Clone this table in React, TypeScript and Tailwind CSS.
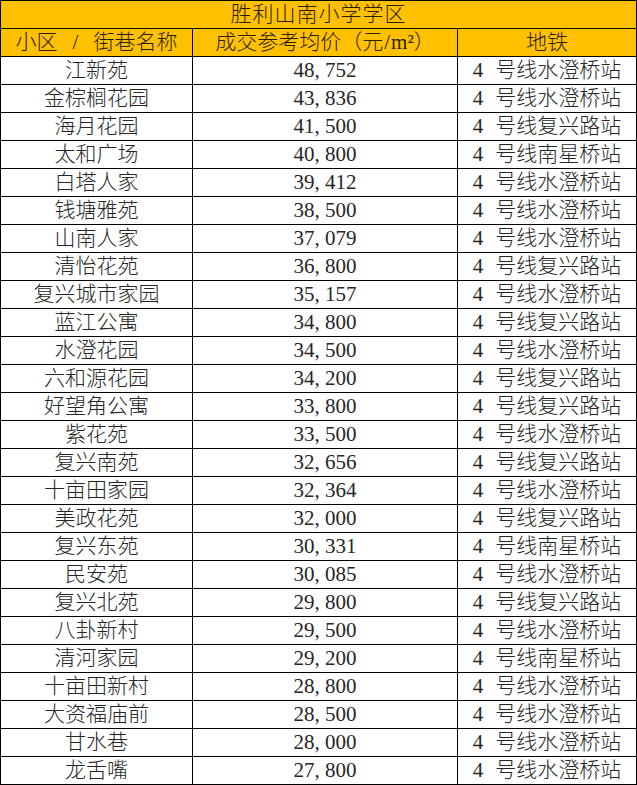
const rows: [string, string, string][] = [
  ["江新苑", "48,752", "水澄桥站"],
  ["金棕榈花园", "43,836", "水澄桥站"],
  ["海月花园", "41,500", "复兴路站"],
  ["太和广场", "40,800", "南星桥站"],
  ["白塔人家", "39,412", "水澄桥站"],
  ["钱塘雅苑", "38,500", "水澄桥站"],
  ["山南人家", "37,079", "水澄桥站"],
  ["清怡花苑", "36,800", "复兴路站"],
  ["复兴城市家园", "35,157", "水澄桥站"],
  ["蓝江公寓", "34,800", "复兴路站"],
  ["水澄花园", "34,500", "水澄桥站"],
  ["六和源花园", "34,200", "复兴路站"],
  ["好望角公寓", "33,800", "复兴路站"],
  ["紫花苑", "33,500", "水澄桥站"],
  ["复兴南苑", "32,656", "复兴路站"],
  ["十亩田家园", "32,364", "水澄桥站"],
  ["美政花苑", "32,000", "复兴路站"],
  ["复兴东苑", "30,331", "南星桥站"],
  ["民安苑", "30,085", "水澄桥站"],
  ["复兴北苑", "29,800", "复兴路站"],
  ["八卦新村", "29,500", "水澄桥站"],
  ["清河家园", "29,200", "南星桥站"],
  ["十亩田新村", "28,800", "水澄桥站"],
  ["大资福庙前", "28,500", "水澄桥站"],
  ["甘水巷", "28,000", "水澄桥站"],
  ["龙舌嘴", "27,800", "水澄桥站"],
];

const cell =
  "h-[28px] border-r border-b border-black flex items-center justify-center leading-none whitespace-nowrap";
const head = `${cell} bg-[#ffc000] text-[#2a1e00]`;

export default function App() {
  return (
    <div
      className="w-[637px] bg-white text-[21px] font-light text-[#262626]"
      style={{ fontFamily: '"Liberation Serif", "Noto Sans CJK SC", serif' }}
    >
      <div className="grid grid-cols-[192px_265px_179px] border-l border-t border-black">
        <div className={`${head} col-span-3 tracking-[1px]`}>胜利山南小学学区</div>
        <div className={head}>
          小区<span className="mx-[15px]">/</span>街巷名称
        </div>
        <div className={head}>
          成交参考均价（元<span className="mx-[1px]">/</span>m²）
        </div>
        <div className={head}>地铁</div>
        {rows.map(([name, price, station]) => (
          <div key={name} className="contents">
            <div className={cell}>{name}</div>
            <div className={cell}>{price.replace(",", ", ")}</div>
            <div className={cell}>
              <span className="mr-[12px]">4</span>号线{station}
            </div>
          </div>
        ))}
      </div>
    </div>
  );
}
